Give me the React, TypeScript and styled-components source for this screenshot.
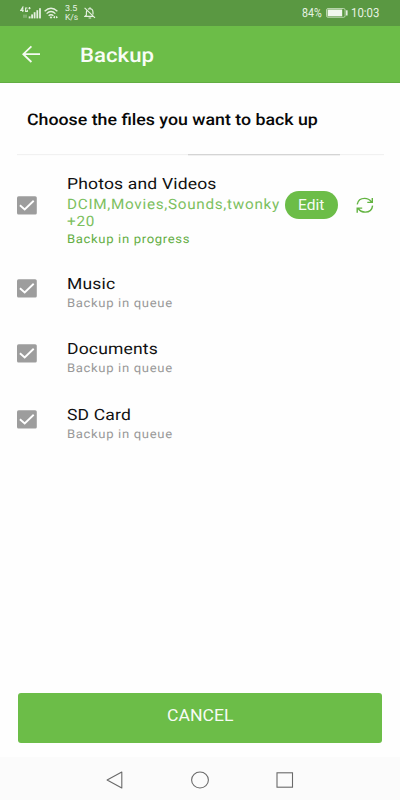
import React from "react";
import styled, { createGlobalStyle } from "styled-components";

const Global = createGlobalStyle`
  * { box-sizing: border-box; }
  body { margin: 0; background: #fff; font-family: Roboto, "Liberation Sans", sans-serif; text-rendering: geometricPrecision; }
  svg { display: block; flex: none; }
`;

const Screen = styled.div`
  width: 400px;
  height: 800px;
  display: flex;
  flex-direction: column;
  overflow: hidden;
  background: #fefefe;
`;

const Label = styled.span<{ $size: number; $line: number; $stretch?: number; $spacing?: number; $color?: string; $weight?: number }>`
  display: block;
  width: max-content;
  white-space: pre;
  font-size: ${(p) => p.$size}px;
  line-height: ${(p) => p.$line}px;
  letter-spacing: ${(p) => p.$spacing ?? 0}px;
  color: ${(p) => p.$color ?? "#111"};
  font-weight: ${(p) => p.$weight ?? 400};
  transform: scaleX(${(p) => p.$stretch ?? 1});
  transform-origin: left center;
`;

const StatusBar = styled.div`
  height: 26px;
  flex: none;
  display: flex;
  justify-content: space-between;
  background: #5a9842;
  padding: 0 20px;
`;

const StatusGroup = styled.div<{ $gap?: number }>`
  display: flex;
  align-items: center;
  gap: ${(p) => p.$gap ?? 0}px;
`;

const Speed = styled.div`
  width: 20px;
  margin: 2px -3px 0 4px;
`;

const Percent = styled.div`
  width: 24px;
  padding-top: 2px;
`;

const Clock = styled.div`
  width: 29px;
  margin-left: 3px;
  padding-top: 2px;
`;

const Header = styled.header`
  height: 57px;
  flex: none;
  display: flex;
  align-items: flex-start;
  gap: 39px;
  padding: 19px 0 0 21px;
  background: #6cbd48;
  border-bottom: 1px solid #62ad42;
`;

const HeaderTitle = styled.div`
  margin-top: -2px;
`;

const Main = styled.main`
  flex: 1;
  display: flex;
  flex-direction: column;
  padding: 0 18px;
`;

const Heading = styled.h1`
  margin: 0;
  height: 71px;
  padding: 26px 0 0 9px;
`;

const Track = styled.div`
  height: 2px;
  padding-left: 171px;
  background: linear-gradient(#f1f1f1 0 1px, #fcfcfc 1px);
  margin: 0 -2px 0 -1px;
`;

const Progress = styled.div`
  height: 2px;
  width: 152px;
  background: linear-gradient(#d4d4d4 0 1px, #f0f0f0 1px);
`;

const List = styled.div`
  display: flex;
  flex-direction: column;
  padding-top: 19px;
  margin-left: -1px;
`;

const Row = styled.div<{ $height: number }>`
  height: ${(p) => p.$height}px;
  display: flex;
`;

const CheckCell = styled.div<{ $top: number }>`
  width: 50px;
  padding-top: ${(p) => p.$top}px;
`;

const Texts = styled.div`
  width: 217px;
`;

const EditButton = styled.button`
  width: 53.5px;
  height: 28px;
  margin: 16px 18.5px 0 0.6px;
  padding: 1px 0 0 13.5px;
  border: 0;
  border-radius: 14px;
  background: #6cbd48;
  font-family: inherit;
  text-align: left;
`;

const SyncCell = styled.div`
  padding-top: 22px;
  margin-left: -0.6px;
`;

const CancelButton = styled.button`
  height: 49.5px;
  margin: auto 0 14.5px;
  padding: 0 0 4px 148.8px;
  border: 0;
  border-radius: 3px;
  background: #6cbd48;
  font-family: inherit;
`;

const NavBar = styled.nav`
  height: 43px;
  flex: none;
  display: flex;
  align-items: center;
  justify-content: center;
  padding-top: 2px;
  gap: 67px;
  background: #fbfbfb;
`;

const Check = () => (
  <svg width="20" height="19" viewBox="0 0 20 19">
    <rect y=".2" width="19.8" height="18.3" rx="1.6" fill="#9d9d9d" />
    <path d="M2.9 9.2 7.7 13.4 16.7 4.8" fill="none" stroke="#fff" strokeWidth="1.9" />
  </svg>
);

const Signal = () => (
  <svg width="22" height="14" viewBox="0 0 22 14">
    <g fill="none" stroke="#e4f0df" strokeWidth="1.1">
      <path d="M2.8 6V1.2L.7 4.5h3M7.4 2H5.6v3.4h1.8V3.8M8.4 2.2h2.2M9.5 1.1v2.2" />
      <path d="M4 8.6v3.2M6 8.6v3.2" strokeWidth=".8" opacity=".7" />
    </g>
    <g fill="#e4f0df">
      <rect x="8.7" y="10.4" width="1.8" height="2" />
      <rect x="11.2" y="8.4" width="1.8" height="4" />
      <rect x="13.7" y="6.2" width="1.8" height="6.2" />
      <rect x="16.4" y="4.2" width="1.8" height="8.2" />
      <rect x="19.1" y="2.2" width="1.8" height="10.2" />
    </g>
  </svg>
);

const Wifi = () => (
  <svg width="15" height="12" viewBox="0 0 15 12">
    <g fill="none" stroke="#e4f0df" strokeWidth="1.3">
      <path d="M.6 4.2Q7 -1.8 13.4 4.2M2.6 6.6Q7 2.4 11.4 6.6M4.6 8.8Q7 6.6 9.4 8.8" />
    </g>
    <path d="m5.7 10.2 1.3-.9 1.3.9L7 11.8zM11 8.8v2.8L8.9 10.2zM11.9 8.8l2.2 1.4-2.2 1.4z" fill="#e4f0df" />
  </svg>
);

const BellOff = () => (
  <svg width="12" height="12" viewBox="0 0 12 12">
    <path d="M3 3.4Q2.4 4.2 2.4 5.4V8L1 9.4h8.6M4 2.2Q6 .8 8 2.4 9 3.4 9 5.4V7.6M4.6 11h2.6M6 .2v1.4M.6.8l10.4 10" fill="none" stroke="#e4f0df" strokeWidth="1.15" />
  </svg>
);

const Battery = () => (
  <svg width="22" height="10" viewBox="0 0 22 10">
    <rect x=".5" y=".5" width="18.6" height="8.8" rx="1.5" fill="none" stroke="#cfe3c7" strokeWidth=".8" />
    <rect x="1.6" y="1.5" width="14.6" height="6.8" fill="#f1f7ee" />
    <rect x="20" y="2.3" width="1.6" height="5.2" fill="#e0eddb" />
  </svg>
);

const Back = () => (
  <svg width="20" height="18" viewBox="0 0 20 18">
    <path d="M19 9.2H2.5M10.4 1.4 2.3 9.2l8.1 7.8" fill="none" stroke="#f4faf1" strokeWidth="1.8" />
  </svg>
);

const Sync = () => (
  <svg width="18" height="17" viewBox="0 0 18 17">
    <g fill="none" stroke="#62b340" strokeWidth="1.4">
      <path d="M1.2 7.3C2 3.4 5 1.4 8.6 1.4c3 0 5.2 1.3 6.8 3.4M16.3 1v4.4h-5" />
      <path d="M16.6 8.6c-.5 4.2-3.6 6.5-7.4 6.5-3 0-5.4-1.3-7-3.6M1.2 15.8v-4.7h5" />
    </g>
  </svg>
);

const QUEUED = ["Music", "Documents", "SD Card"];

export default function App() {
  return (
    <Screen>
      <Global />
      <StatusBar>
        <StatusGroup $gap={2}>
          <Signal />
          <Wifi />
          <Speed>
            <Label $size={8.5} $line={9} $stretch={1.05} $color="#e8f3e4">3.5</Label>
            <Label $size={8.5} $line={9} $stretch={1} $color="#e8f3e4">K/s</Label>
          </Speed>
          <BellOff />
        </StatusGroup>
        <StatusGroup>
          <Percent>
            <Label $size={12.5} $line={14} $stretch={0.85} $color="#e8f3e4">84%</Label>
          </Percent>
          <Battery />
          <Clock>
            <Label $size={12.5} $line={14} $stretch={0.91} $color="#e8f3e4">10:03</Label>
          </Clock>
        </StatusGroup>
      </StatusBar>
      <Header>
        <Back />
        <HeaderTitle>
          <Label $size={20} $line={24} $weight={500} $stretch={1.11} $color="#f8fcf6">Backup</Label>
        </HeaderTitle>
      </Header>
      <Main>
        <Heading>
          <Label $size={16} $line={22} $weight={500} $stretch={1.11} $color="#080808">Choose the files you want to back up</Label>
        </Heading>
        <Track>
          <Progress />
        </Track>
        <List>
          <Row $height={99.6}>
            <CheckCell $top={21}><Check /></CheckCell>
            <Texts>
              <Label $size={15.5} $line={19} $spacing={0.15} $stretch={1.13}>Photos and Videos</Label>
              <Label $size={14.3} $line={22} $spacing={0.65} $stretch={1.07} $color="#7cc05e">DCIM,Movies,Sounds,twonky</Label>
              <Label $size={14.3} $line={12} $spacing={0.65} $stretch={1.07} $color="#7cc05e">+20</Label>
              <Label $size={12} $line={23} $spacing={0.6} $stretch={1.09} $color="#64ae45">Backup in progress</Label>
            </Texts>
            <EditButton>
              <Label $size={14.5} $line={28} $stretch={1.07} $color="#f6fbf4">Edit</Label>
            </EditButton>
            <SyncCell><Sync /></SyncCell>
          </Row>
          {QUEUED.map((name) => (
            <Row $height={65.6} key={name}>
              <CheckCell $top={4}><Check /></CheckCell>
              <Texts>
                <Label $size={15.5} $line={19} $spacing={0.15} $stretch={1.13}>{name}</Label>
                <Label $size={12} $line={18.6} $spacing={0.6} $stretch={1.09} $color="#999">Backup in queue</Label>
              </Texts>
            </Row>
          ))}
        </List>
        <CancelButton>
          <Label $size={16} $line={20} $stretch={1.1} $color="#f6fbf4">CANCEL</Label>
        </CancelButton>
      </Main>
      <NavBar>
        <svg width="18" height="18" viewBox="0 0 18 18">
          <path d="M15.8 1v16L1.1 9z" fill="none" stroke="#696969" strokeWidth="1.1" strokeLinejoin="round" />
        </svg>
        <svg width="18" height="18" viewBox="0 0 18 18">
          <ellipse cx="9" cy="9" rx="8.4" ry="8" fill="none" stroke="#696969" strokeWidth="1.1" />
        </svg>
        <svg width="18" height="18" viewBox="0 0 18 18">
          <rect x="1" y="1.8" width="15.5" height="14.4" fill="none" stroke="#696969" strokeWidth="1.1" />
        </svg>
      </NavBar>
    </Screen>
  );
}
